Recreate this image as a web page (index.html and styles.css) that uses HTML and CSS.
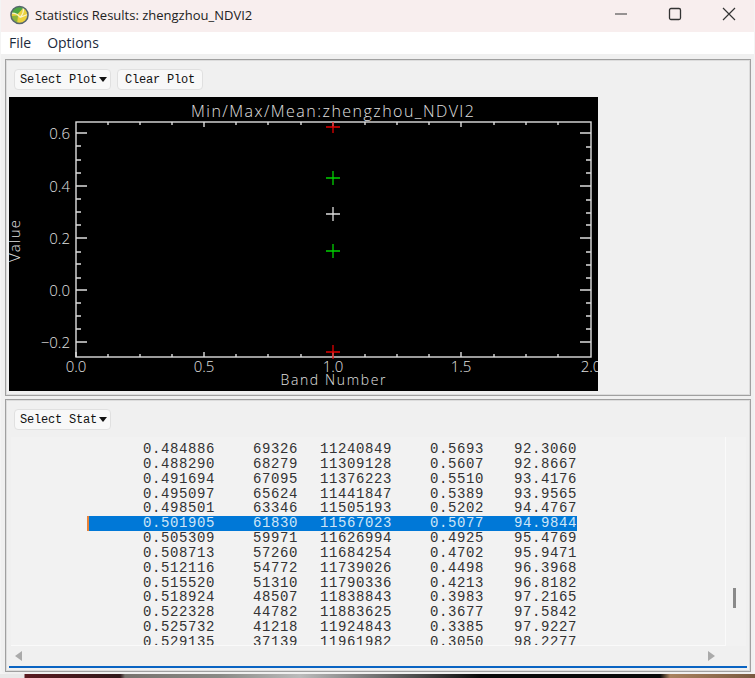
FILE: index.html
```html
<!DOCTYPE html>
<html lang="en">
<head>
    <meta charset="UTF-8">
    <title>Statistics Results: zhengzhou_NDVI2</title>
    <link rel="stylesheet" href="styles.css">
</head>
<body>
    <div class="window">
        <div class="titlebar">
            <svg class="app-icon" width="19" height="20" viewBox="0 0 20 20">
                <circle cx="10" cy="10" r="9" fill="#ecd23c"/>
                <path d="M10 1a9 9 0 0 0-8.500 7l6 1.500 7-7.500z" fill="#4fa544"/>
                <path d="M1.500 11a9 9 0 0 0 6 7.500l1-8z" fill="#8db53c"/>
                <path d="M2 8q6 0 8.500 4.500M14 2q1 6-3.500 10.500M10.500 12.500l8-3" fill="none" stroke="#f8f3cc" stroke-width="1.300"/>
                <circle cx="10" cy="10" r="9" fill="none" stroke="#56666f" stroke-width="1.600"/>
            </svg>
            <span class="title-text">Statistics Results: zhengzhou_NDVI2</span>
            <div class="win-controls">
                <svg class="win-btn" width="14" height="14" viewBox="0 0 14 14"><path d="M1 7h12" stroke="#555" stroke-width="1.200"/></svg>
                <svg class="win-btn" width="14" height="14" viewBox="0 0 14 14"><rect x="1.500" y="1.500" width="11" height="11" rx="1.500" fill="none" stroke="#333" stroke-width="1.300"/></svg>
                <svg class="win-btn" width="14" height="14" viewBox="0 0 14 14"><path d="M1 1l12 12M13 1L1 13" stroke="#333" stroke-width="1.200"/></svg>
            </div>
        </div>

        <div class="menubar">
            <span class="menu-item">File</span>
            <span class="menu-item">Options</span>
        </div>

        <div class="content">
            <div class="panel plot-panel">
                <div class="toolbar">
                    <div class="idl-button with-caret">Select Plot<span class="caret"></span></div>
                    <div class="idl-button">Clear Plot</div>
                </div>
                <svg class="plot" width="589" height="294" viewBox="9 97 589 294">
                    <rect x="9" y="97" width="589" height="294" fill="#000"/>
                    <!-- axes box -->
                    <rect x="76" y="122" width="515" height="235" class="plot-line"/>
                    <!-- x ticks, bottom and top -->
                    <path class="plot-line" d="M76 357v-5M108 357v-3M140 357v-3M172 357v-3M204 357v-5M236 357v-3M268 357v-3M301 357v-3M333 357v-5M365 357v-3M397 357v-3M429 357v-3M461 357v-5M494 357v-3M526 357v-3M558 357v-3"/>
                    <path class="plot-line" d="M108 122v3M140 122v3M172 122v3M204 122v5M236 122v3M268 122v3M301 122v3M333 122v5M365 122v3M397 122v3M429 122v3M461 122v5M494 122v3M526 122v3M558 122v3"/>
                    <!-- y ticks, left and right -->
                    <path class="plot-line" d="M76 133h11M76 146h5M76 160h5M76 173h5M76 186h11M76 199h5M76 212h5M76 225h5M76 238h11M76 252h5M76 264h5M76 278h5M76 290h11M76 303h5M76 316h5M76 329h5M76 342h11"/>
                    <path class="plot-line" d="M591 133h-11M591 147h-5M591 160h-5M591 173h-5M591 186h-11M591 200h-5M591 213h-5M591 225h-5M591 238h-11M591 252h-5M591 265h-5M591 278h-5M591 290h-11M591 303h-5M591 316h-5M591 329h-5M591 342h-11"/>
                    <!-- band markers -->
                    <path d="M326 127h14M333 122v11M326 352h14M333 345v14" stroke="#e00000" stroke-width="1.300" fill="none"/>
                    <path d="M326 178h14M333 171v14M326 251h14M333 244v14" stroke="#00d000" stroke-width="1.300" fill="none"/>
                    <path d="M326 214h14M333 207v14" stroke="#ddd" stroke-width="1.300" fill="none"/>
                    <text class="plot-title" x="191" y="117" textLength="283">Min/Max/Mean:zhengzhou_NDVI2</text>
                    <text class="plot-label" x="70" y="139" text-anchor="end">0.6</text>
                    <text class="plot-label" x="70" y="192" text-anchor="end">0.4</text>
                    <text class="plot-label" x="70" y="244" text-anchor="end">0.2</text>
                    <text class="plot-label" x="70" y="296" text-anchor="end">0.0</text>
                    <text class="plot-label" x="70" y="348" text-anchor="end">−0.2</text>
                    <text class="plot-label" x="76" y="372" text-anchor="middle">0.0</text>
                    <text class="plot-label" x="204" y="372" text-anchor="middle">0.5</text>
                    <text class="plot-label" x="333" y="372" text-anchor="middle">1.0</text>
                    <text class="plot-label" x="461" y="372" text-anchor="middle">1.5</text>
                    <text class="plot-label" x="591" y="372" text-anchor="middle">2.0</text>
                    <text class="plot-label band-label" x="333" y="385" text-anchor="middle" textLength="105">Band Number</text>
                    <text class="plot-label" transform="translate(20 262) rotate(-90)" textLength="42">Value</text>
                </svg>
            </div>

            <div class="panel stat-panel">
                <div class="toolbar">
                    <div class="idl-button with-caret">Select Stat<span class="caret"></span></div>
                </div>
                <div class="stat-list">
                    <div class="rows">
                        <div class="row"><span>0.484886</span><span>69326</span><span>11240849</span><span>0.5693</span><span>92.3060</span></div>
                        <div class="row"><span>0.488290</span><span>68279</span><span>11309128</span><span>0.5607</span><span>92.8667</span></div>
                        <div class="row"><span>0.491694</span><span>67095</span><span>11376223</span><span>0.5510</span><span>93.4176</span></div>
                        <div class="row"><span>0.495097</span><span>65624</span><span>11441847</span><span>0.5389</span><span>93.9565</span></div>
                        <div class="row"><span>0.498501</span><span>63346</span><span>11505193</span><span>0.5202</span><span>94.4767</span></div>
                        <div class="row selected"><span>0.501905</span><span>61830</span><span>11567023</span><span>0.5077</span><span>94.9844</span></div>
                        <div class="row"><span>0.505309</span><span>59971</span><span>11626994</span><span>0.4925</span><span>95.4769</span></div>
                        <div class="row"><span>0.508713</span><span>57260</span><span>11684254</span><span>0.4702</span><span>95.9471</span></div>
                        <div class="row"><span>0.512116</span><span>54772</span><span>11739026</span><span>0.4498</span><span>96.3968</span></div>
                        <div class="row"><span>0.515520</span><span>51310</span><span>11790336</span><span>0.4213</span><span>96.8182</span></div>
                        <div class="row"><span>0.518924</span><span>48507</span><span>11838843</span><span>0.3983</span><span>97.2165</span></div>
                        <div class="row"><span>0.522328</span><span>44782</span><span>11883625</span><span>0.3677</span><span>97.5842</span></div>
                        <div class="row"><span>0.525732</span><span>41218</span><span>11924843</span><span>0.3385</span><span>97.9227</span></div>
                        <div class="row"><span>0.529135</span><span>37139</span><span>11961982</span><span>0.3050</span><span>98.2277</span></div>
                    </div>
                    <div class="vscroll"><div class="vthumb"></div></div>
                </div>
                <div class="hscroll">
                    <span class="arrow-left"></span>
                    <span class="arrow-right"></span>
                </div>
                <div class="accent-line"></div>
            </div>
        </div>
    </div>
    <div class="desktop-strip"></div>
</body>
</html>
```

FILE: styles.css
```css
html, body {
    margin: 0;
    padding: 0;
}

body {
    width: 755px;
    height: 678px;
    overflow: hidden;
    background-color: #f4f4f4;
    font-family: "Open Sans", "Noto Sans", sans-serif;
}

.window {
    height: 674px;
    margin-left: 1px;
    margin-right: 1px;
    background-color: #f0f0f0;
    border-radius: 0 0 6px 6px;
    display: flex;
    flex-direction: column;
}

.titlebar {
    height: 32px;
    flex-shrink: 0;
    background-color: #f8eeee;
    display: flex;
    align-items: center;
    padding-left: 9px;
}

.app-icon {
    margin-top: -3px;
}

.title-text {
    margin-left: 6px;
    margin-top: -3px;
    font-size: 13px;
    color: #222;
}

.win-controls {
    margin-left: auto;
    margin-top: -4px;
    margin-right: 18px;
    display: flex;
    gap: 40px;
}

.menubar {
    height: 22px;
    flex-shrink: 0;
    background-color: #fff;
    display: flex;
    align-items: center;
    gap: 16px;
    padding-left: 8px;
    padding-bottom: 1px;
    box-sizing: border-box;
    font-size: 14px;
    color: #1c2a3c;
}

.content {
    flex: 1;
    padding: 5px 3px 0 4px;
    display: flex;
    flex-direction: column;
    gap: 3px;
}

.panel {
    border: 1px solid #a0a0a0;
    box-shadow: inset 0 0 0 1px #dcdcdc;
    padding: 9px 3px 0 3px;
    display: flex;
    flex-direction: column;
}

.plot-panel {
    height: 337px;
    box-sizing: border-box;
}

.stat-panel {
    height: 273px;
    box-sizing: border-box;
}

.toolbar {
    display: flex;
    gap: 6px;
    padding-left: 5px;
    margin-bottom: 7px;
}

.idl-button {
    height: 21px;
    box-sizing: border-box;
    padding: 0 7px;
    background-color: #f8f8f8;
    border: 1px solid #e0e0e0;
    border-radius: 4px;
    font-family: "Liberation Mono", monospace;
    font-size: 12px;
    letter-spacing: -0.2px;
    color: #111;
    display: flex;
    align-items: center;
    white-space: pre;
}

.idl-button.with-caret {
    padding: 0 3px 0 5px;
}

.caret {
    width: 0;
    height: 0;
    margin-left: 2px;
    border-left: 4px solid transparent;
    border-right: 4px solid transparent;
    border-top: 5px solid #111;
}

.plot {
    display: block;
}

.plot-line {
    fill: none;
    stroke: #ddd;
    stroke-width: 1.4;
}

.plot-title {
    font-family: "Open Sans", sans-serif;
    font-weight: 300;
    font-size: 16px;
    fill: #eee;
    opacity: 0.95;
}

.plot-label {
    font-family: "Open Sans", sans-serif;
    font-weight: 300;
    font-size: 15px;
    fill: #eee;
    opacity: 0.95;
}

.band-label {
    font-size: 14px;
}

.stat-list {
    height: 209px;
    margin-left: 2px;
    margin-right: 1px;
    flex-shrink: 0;
    display: flex;
}

.rows {
    width: 715px;
    box-sizing: border-box;
    padding-top: 5px;
    overflow: hidden;
    background-color: #f2f2f2;
    border-right: 1px solid #fafafa;
    border-bottom: 1px solid #fafafa;
}

.row {
    margin-left: 76px;
    width: 490px;
    height: 14.85px;
    display: grid;
    grid-template-columns: 128px 83px 94px 92px 93px;
    font-family: "Liberation Mono", monospace;
    font-size: 14px;
    line-height: 15px;
    letter-spacing: 0.6px;
    color: #333;
    text-align: right;
}

.row.selected {
    background-color: #0078d7;
    color: #cfe6f8;
    box-shadow: inset 2px 0 0 #e8833a;
}

.vscroll {
    flex: 1;
    background-color: #f2f2f2;
    padding-top: 151px;
    padding-left: 7px;
}

.vthumb {
    width: 3px;
    height: 20px;
    background-color: #8a8a8a;
}

.hscroll {
    height: 20px;
    flex-shrink: 0;
    padding: 0 32px 0 6px;
    display: flex;
    align-items: center;
    justify-content: space-between;
}

.arrow-left {
    border-top: 5px solid transparent;
    border-bottom: 5px solid transparent;
    border-right: 7px solid #aaa;
}

.arrow-right {
    border-top: 5px solid transparent;
    border-bottom: 5px solid transparent;
    border-left: 7px solid #aaa;
}

.accent-line {
    height: 2px;
    background-color: #0a64c2;
}

.desktop-strip {
    height: 4px;
    background: linear-gradient(to right, #e8e8e8 0, #e8e8e8 24px, #5a1a20 25px, #30181a 120px, #77736e 125px, #8a8a86 220px, #bbb 300px, #444 425px, #0a0a0a 480px, #0a0a0a 660px, #a8825f 670px, #7a5a40 755px);
}
```
